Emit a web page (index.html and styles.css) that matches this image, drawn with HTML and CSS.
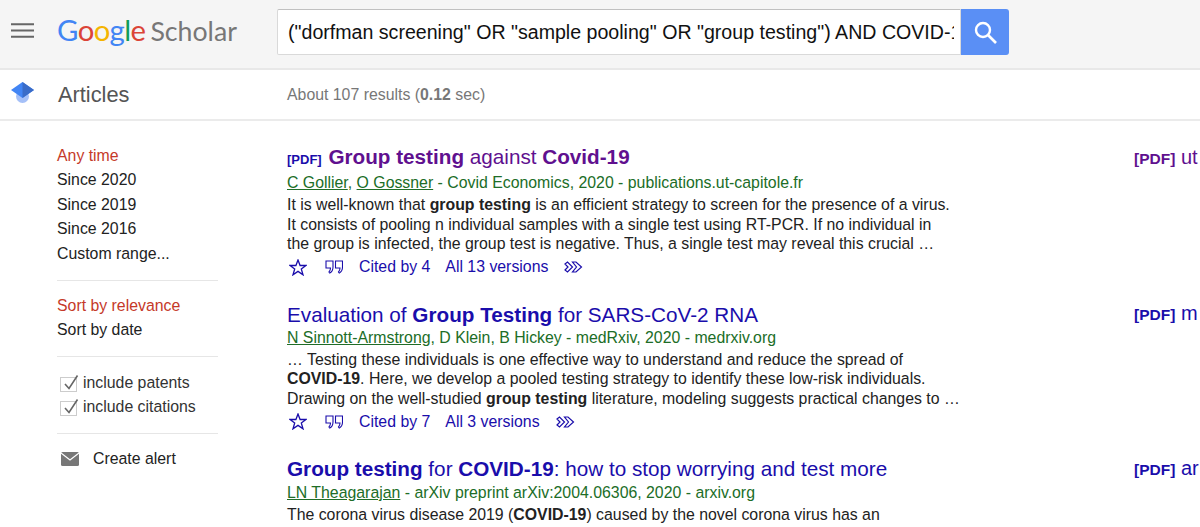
FILE: index.html
```html
<!DOCTYPE html>
<html lang="en">
<head>
<meta charset="utf-8">
<title>Google Scholar</title>
<link rel="stylesheet" href="styles.css">
</head>
<body>
<header class="topbar">
  <svg class="menu" width="23" height="15" viewBox="0 0 23 15"><path d="M0 1.200H23M0 7.500H23M0 13.800H23" stroke="#666" stroke-width="2"/></svg>
  <div class="logo"><span class="lb">G</span><span class="lr">o</span><span class="ly">o</span><span class="lb">g</span><span class="lg">l</span><span class="lr">e</span><span class="scholar">Scholar</span></div>
  <form class="search">
    <div class="query"><span>("dorfman screening" OR "sample pooling" OR "group testing") AND COVID-19</span></div>
    <div class="go"><svg width="26" height="26" viewBox="0 0 26 26"><circle cx="11" cy="11" r="7" fill="none" stroke="#fff" stroke-width="2.400"/><path d="M16 16L24 24" stroke="#fff" stroke-width="2.600"/></svg></div>
  </form>
</header>
<div class="subbar">
  <svg class="cap" width="24" height="22" viewBox="0 0 24 22"><circle cx="11.500" cy="14.500" r="6.500" fill="#a5c0f8"/><path d="M11.500 0L23 8L11.500 16L0 8Z" fill="#4285f4"/><path d="M11.500 0L23 8L11.500 16Z" fill="#3a6cc8"/></svg>
  <div class="section">Articles</div>
  <div class="stats">About 107 results (<b>0.12</b> sec)</div>
</div>
<main class="page">
  <aside class="side">
    <ul class="filters first">
      <li class="on">Any time</li><li>Since 2020</li><li>Since 2019</li><li>Since 2016</li><li>Custom range...</li>
    </ul>
    <ul class="filters">
      <li class="on">Sort by relevance</li><li>Sort by date</li>
    </ul>
    <ul class="filters opts">
      <li class="chk"><svg width="20" height="18" viewBox="0 0 20 18"><rect x="0.500" y="3.500" width="16" height="14" fill="#fff" stroke="#ccc"/><path d="M5 10L9 14.500L17.500 1.500" fill="none" stroke="#666" stroke-width="1.600"/></svg>include patents</li>
      <li class="chk"><svg width="20" height="18" viewBox="0 0 20 18"><rect x="0.500" y="3.500" width="16" height="14" fill="#fff" stroke="#ccc"/><path d="M5 10L9 14.500L17.500 1.500" fill="none" stroke="#666" stroke-width="1.600"/></svg>include citations</li>
    </ul>
    <div class="alert"><svg width="18" height="14" viewBox="0 0 18 14"><rect width="18" height="14" rx="1.500" fill="#777"/><path d="M0 1L9 8L18 1" fill="none" stroke="#fff" stroke-width="1.200"/></svg>Create alert</div>
  </aside>
  <section class="results">
    <article class="res">
      <h3><span class="tag">[PDF]</span> <a class="visited"><b>Group testing</b> against <b>Covid-19</b></a></h3>
      <div class="meta"><u>C Gollier</u>, <u>O Gossner</u> - Covid Economics, 2020 - publications.ut-capitole.fr</div>
      <p>It is well-known that <b>group testing</b> is an efficient strategy to screen for the presence of a virus.<br>It consists of pooling n individual samples with a single test using RT-PCR. If no individual in<br>the group is infected, the group test is negative. Thus, a single test may reveal this crucial …</p>
      <div class="acts">
        <svg class="star" width="18" height="17" viewBox="0 0 18 17"><path d="M9 1L11.100 6.500H17L12.300 10L14 15.800L9 12.400L4 15.800L5.700 10L1 6.500H6.900Z" fill="none" stroke="#1a0dab" stroke-width="1.300"/></svg>
        <svg class="quote" width="18" height="14" viewBox="0 0 18 14"><path d="M1 1H8V7C8 10 6.800 12 4.800 13L4 12C5 11 5.500 9.500 5.500 8H1ZM10.500 1H17.500V7C17.500 10 16.300 12 14.300 13L13.500 12C14.500 11 15 9.500 15 8H10.500Z" fill="none" stroke="#1a0dab" stroke-width="1.100"/></svg>
        <span>Cited by 4</span><span>All 13 versions</span>
        <svg class="more" width="19" height="12" viewBox="0 0 19 12"><path d="M1 3L3.500 1L8.500 6L3.500 11L1 9L4 6ZM8.500 1H12L17.500 6L12 11H8.500L12.500 6Z" fill="none" stroke="#1a0dab" stroke-width="1.200"/></svg>
      </div>
    </article>
    <article class="res">
      <h3><a>Evaluation of <b>Group Testing</b> for SARS-CoV-2 RNA</a></h3>
      <div class="meta"><u>N Sinnott-Armstrong</u>, D Klein, B Hickey - medRxiv, 2020 - medrxiv.org</div>
      <p>… Testing these individuals is one effective way to understand and reduce the spread of<br><b>COVID-19</b>. Here, we develop a pooled testing strategy to identify these low-risk individuals.<br>Drawing on the well-studied <b>group testing</b> literature, modeling suggests practical changes to …</p>
      <div class="acts">
        <svg class="star" width="18" height="17" viewBox="0 0 18 17"><path d="M9 1L11.100 6.500H17L12.300 10L14 15.800L9 12.400L4 15.800L5.700 10L1 6.500H6.900Z" fill="none" stroke="#1a0dab" stroke-width="1.300"/></svg>
        <svg class="quote" width="18" height="14" viewBox="0 0 18 14"><path d="M1 1H8V7C8 10 6.800 12 4.800 13L4 12C5 11 5.500 9.500 5.500 8H1ZM10.500 1H17.500V7C17.500 10 16.300 12 14.300 13L13.500 12C14.500 11 15 9.500 15 8H10.500Z" fill="none" stroke="#1a0dab" stroke-width="1.100"/></svg>
        <span>Cited by 7</span><span>All 3 versions</span>
        <svg class="more" width="19" height="12" viewBox="0 0 19 12"><path d="M1 3L3.500 1L8.500 6L3.500 11L1 9L4 6ZM8.500 1H12L17.500 6L12 11H8.500L12.500 6Z" fill="none" stroke="#1a0dab" stroke-width="1.200"/></svg>
      </div>
    </article>
    <article class="res last">
      <h3><a><b>Group testing</b> for <b>COVID-19</b>: how to stop worrying and test more</a></h3>
      <div class="meta"><u>LN Theagarajan</u> - arXiv preprint arXiv:2004.06306, 2020 - arxiv.org</div>
      <p>The corona virus disease 2019 (<b>COVID-19</b>) caused by the novel corona virus has an</p>
    </article>
  </section>
  <aside class="links">
    <div class="link"><b class="tag visited">[PDF]</b> <span class="visited">ut</span></div>
    <div class="link"><b class="tag">[PDF]</b> <span>m</span></div>
    <div class="link"><b class="tag">[PDF]</b> <span>ar</span></div>
  </aside>
</main>
</body>
</html>
```
FILE: styles.css
```css
* { box-sizing: border-box; }
html, body { margin: 0; height: 527px; overflow: hidden; background: #fff; }
body { font-family: "Liberation Sans", Arial, sans-serif; font-size: 15.850px; color: #222; }
ul { list-style: none; margin: 0; padding: 0; }
h3, p { margin: 0; font-weight: normal; }
.topbar { display: flex; align-items: center; height: 70px; padding: 0 0 1px 11px; background: #f5f5f5; border-bottom: 2px solid #e8e8e8; }
.menu { flex: none; margin-right: 23px; margin-top: -6px; }
.logo { width: 220px; flex: none; font-family: Lato, sans-serif; font-size: 29.300px; letter-spacing: -0.600px; margin-top: -9px; white-space: nowrap; }
.lb { color: #4285f4; } .lr { color: #db4437; } .ly { color: #f4b400; } .lg { color: #0f9d58; }
.scholar { color: #777; margin-left: 5px; letter-spacing: 0; font-size: 26.700px; }
.search { display: flex; height: 46px; margin-top: -3px; }
.query { width: 684px; background: #fff; border: 1px solid #d9d9d9; border-top-color: #c0c0c0; border-radius: 2px 0 0 2px; padding: 0 0 0 10px; font-size: 19.600px; color: #111; line-height: 44px; overflow: hidden; white-space: nowrap; }
.query span { display: block; width: 666px; overflow: hidden; }
.go { width: 48px; background: #5a8ff5; border-radius: 0 3px 3px 0; display: flex; align-items: center; justify-content: center; }
.subbar { display: flex; align-items: center; height: 51px; border-bottom: 2px solid #ebebeb; padding-left: 11px; }
.cap { flex: none; margin-right: 23px; margin-top: -3px; }
.section { width: 229px; font-size: 21.800px; color: #555; }
.stats { color: #777; }
.page { display: grid; grid-template-columns: 287px 847px 66px; }
.side { padding: 23px 0 0 57px; }
.filters { width: 161px; padding-bottom: 13px; margin-bottom: 13px; border-bottom: 1px solid #e6e6e6; }
.first { padding-bottom: 14px; }
.filters li { line-height: 24.400px; color: #222; white-space: nowrap; }
.filters .on { color: #c53929; }
.opts { margin-top: 14px; }
.filters .chk { display: flex; align-items: center; gap: 3px; margin-left: 3px; color: #333; }
.alert { display: flex; align-items: center; gap: 14px; margin: 2px 0 0 4px; line-height: 24px; color: #222; }
.results { padding-top: 24px; }
.res { width: 700px; margin-bottom: 23.500px; }
.last { margin-bottom: 0; }
.last .meta { margin-top: 1px; }
h3 { font-size: 20.700px; line-height: 24px; white-space: nowrap; }
h3 a { color: #1a0dab; }
h3 a.visited, .visited { color: #60108f; }
.tag { font-size: 13px; font-weight: bold; color: #1a0dab; margin-right: 1px; }
.meta { color: #206d27; line-height: 21px; margin-bottom: 2px; white-space: nowrap; }
.res p { line-height: 19.500px; color: #222; white-space: nowrap; }
.acts { display: flex; align-items: center; height: 24px; margin-top: 1.500px; color: #1a0dab; }
.star { margin: 0 18px 0 2px; }
.quote { margin-right: 16px; }
.acts span { margin-right: 15px; }
.more { margin-left: 1px; }
.links { padding-top: 23px; }
.link { height: 155.500px; line-height: 26px; font-size: 20px; white-space: nowrap; color: #1a0dab; }
.link:last-child { height: auto; }
.link .tag { font-size: 15.500px; margin-right: 0; }
.link .tag.visited { color: #60108f; }
```
